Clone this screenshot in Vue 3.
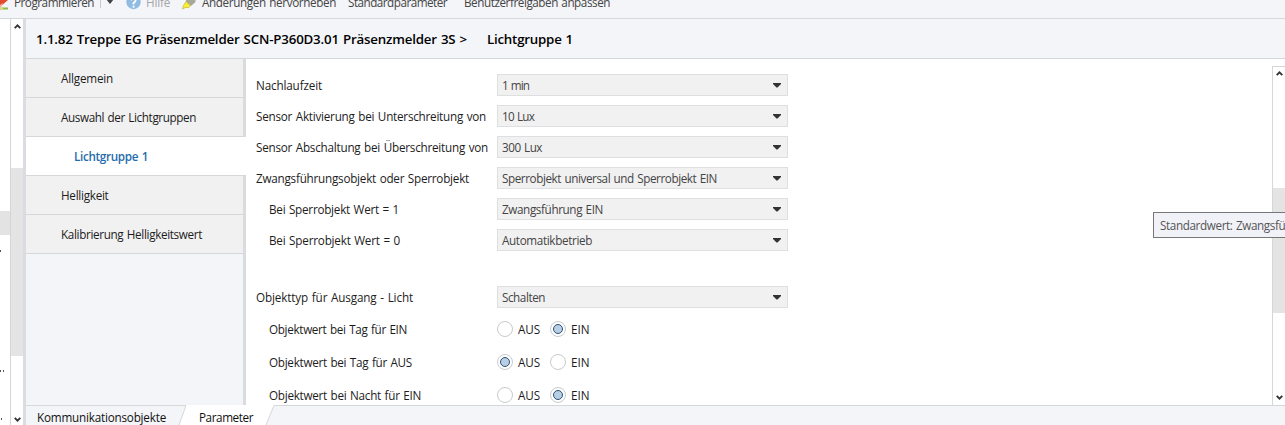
<script setup>
const vFit = {
  mounted(el, { value }) {
    if (!value) return
    const natural = el.getBoundingClientRect().width
    el.style.letterSpacing = (value - 1 - natural) / el.textContent.length + 'px'
  }
}

const nav = [
  { text: 'Allgemein', w: 53 },
  { text: 'Auswahl der Lichtgruppen', w: 136 },
  { text: 'Lichtgruppe 1', w: 75, active: true },
  { text: 'Helligkeit', w: 48.5 },
  { text: 'Kalibrierung Helligkeitswert', w: 142 }
]

const selects = [
  { label: 'Nachlaufzeit', w: 67, value: '1 min', vw: 28 },
  { label: 'Sensor Aktivierung bei Unterschreitung von', w: 231, value: '10 Lux', vw: 33 },
  { label: 'Sensor Abschaltung bei Überschreitung von', w: 233, value: '300 Lux', vw: 41 },
  { label: 'Zwangsführungsobjekt oder Sperrobjekt', w: 214, value: 'Sperrobjekt universal und Sperrobjekt EIN', vw: 216 },
  { label: 'Bei Sperrobjekt Wert = 1', w: 131, value: 'Zwangsführung EIN', vw: 102, sub: true },
  { label: 'Bei Sperrobjekt Wert = 0', w: 132, value: 'Automatikbetrieb', vw: 91, sub: true },
  { label: 'Objekttyp für Ausgang - Licht', w: 158, value: 'Schalten', vw: 44, gap: true }
]

const radios = [
  { label: 'Objektwert bei Tag für EIN', w: 139, on: 1 },
  { label: 'Objektwert bei Tag für AUS', w: 144, on: 0 },
  { label: 'Objektwert bei Nacht für EIN', w: 153, on: 1 }
]
const options = [{ text: 'AUS', w: 23 }, { text: 'EIN', w: 19.5 }]
</script>

<template>
  <div class="app">
    <div class="toolbar">
      <svg class="prog" width="9" height="11" viewBox="0 0 9 11">
        <path d="M0 0H8L0 7Z" fill="#e2492f" />
        <path d="M0 5L3 3L2 6L0 7Z" fill="#f5b59d" />
        <path d="M0 7.5H8V9.5H0Z" fill="#8dbb4a" />
        <path d="M0 7.5H3V9.5H0Z" fill="#e8d77a" />
      </svg>
      <span v-fit="81" class="tb t1">Programmieren</span>
      <i class="sep"></i>
      <svg class="drop" width="8" height="5" viewBox="0 0 8 5"><path d="M0 0H8L4 5Z" fill="#444" /></svg>
      <svg class="help" width="15" height="10" viewBox="0 0 15 10">
        <circle cx="7.5" cy="2" r="7.2" fill="#90bce2" />
        <path d="M5 0Q7.5-2.500 9.500 0Q10 1.500 7.500 3V4.500" fill="none" stroke="#fff" stroke-width="1.800" />
        <rect x="6.600" y="5.700" width="1.900" height="1.900" fill="#fff" />
      </svg>
      <span v-fit="25" class="tb t2 dim">Hilfe</span>
      <svg class="marker" width="15" height="10" viewBox="0 0 15 10">
        <path d="M4 0H13.500V2L9 6L4 2Z" fill="#a9a69a" />
        <path d="M4 1.500L8.500 6L6.500 7.500H3.500L.5 9L1.500 5.500Z" fill="#f7ee2e" stroke="#c5b63c" stroke-width=".7" />
      </svg>
      <span v-fit="135" class="tb t3">Änderungen hervorheben</span>
      <span v-fit="100" class="tb t4">Standardparameter</span>
      <span v-fit="147" class="tb t5">Benutzerfreigaben anpassen</span>
    </div>

    <div class="body">
      <div class="tree">
        <div class="tree-row"></div>
        <span class="cut c1"></span><span class="cut c2"></span><span class="cut c3"></span><span class="cut c4"></span>
      </div>
      <div class="scroll left">
        <svg class="arrow" width="7" height="5" viewBox="0 0 7 5"><path d="M.7 4.200L3.500 1.300L6.300 4.200" /></svg>
        <div class="thumb"></div>
        <svg class="arrow" width="7" height="5" viewBox="0 0 7 5"><path d="M.7 .8L3.500 3.700L6.300 .8" /></svg>
      </div>
      <div class="splitter"></div>

      <div class="main">
        <div class="heading">
          <span v-fit="432">1.1.82 Treppe EG Präsenzmelder SCN-P360D3.01 Präsenzmelder 3S &gt;</span>
          <span v-fit="87" class="crumb">Lichtgruppe 1</span>
        </div>
        <div class="content">
          <nav class="side">
            <div v-for="n in nav" :key="n.text" class="item" :class="{ active: n.active }">
              <span v-fit="n.w">{{ n.text }}</span>
            </div>
          </nav>
          <div class="form">
            <div v-for="s in selects" :key="s.label" class="row" :class="{ sub: s.sub, gap: s.gap }">
              <div class="label"><span v-fit="s.w">{{ s.label }}</span></div>
              <div class="select">
                <span v-fit="s.vw">{{ s.value }}</span>
                <svg width="8" height="5" viewBox="0 0 8 5"><path d="M0 0H8V1L4.500 4.500H3.500L0 1Z" fill="#333" /></svg>
              </div>
            </div>
            <div class="radios">
              <div v-for="r in radios" :key="r.label" class="row sub radio-row">
                <div class="label"><span v-fit="r.w">{{ r.label }}</span></div>
                <div v-for="(o, i) in options" :key="o.text" class="option">
                  <i class="radio" :class="{ on: r.on === i }"></i>
                  <span v-fit="o.w">{{ o.text }}</span>
                </div>
              </div>
            </div>
          </div>
          <div class="scroll right">
            <svg class="arrow" width="7" height="5" viewBox="0 0 7 5"><path d="M.7 4.200L3.500 1.300L6.300 4.200" /></svg>
            <div class="thumb"></div>
            <svg class="arrow" width="7" height="5" viewBox="0 0 7 5"><path d="M.7 .8L3.500 3.700L6.300 .8" /></svg>
          </div>
        </div>
        <div class="tabs">
          <svg class="tab-shape" width="1259" height="20" viewBox="0 0 1259 20">
            <path d="M160 0L153 20H240L248 0Z" fill="#fff" />
            <path d="M0 .5H160L153 20M1259 .5H248L240 20" fill="none" stroke="#d5d7d9" />
          </svg>
          <span v-fit="130" class="tab">Kommunikationsobjekte</span>
          <span v-fit="55" class="tab current">Parameter</span>
        </div>
      </div>
    </div>
    <div class="tooltip"><span v-fit="178">Standardwert: Zwangsführung EIN</span></div>
  </div>
</template>

<style>
body { margin: 0; overflow: hidden; }
</style>

<style scoped>
.app {
  position: relative; width: 1285px; height: 425px; overflow: hidden;
  display: flex; flex-direction: column; background: #f4f5f8;
  font: 11.7px/16px "Open Sans", "Noto Sans", sans-serif; word-spacing: 0.8px; color: #1c1c1c;
}
span { white-space: pre; }
svg { display: block; flex: none; }
.toolbar { height: 18px; flex: none; display: flex; align-items: flex-start; border-bottom: 1px solid #d5d7da; }
.tb { margin-top: -6px; color: #444; flex: none; }
.t1 { margin-left: 5px; }
.sep { width: 1px; height: 8px; background: #c9cacc; margin-left: 6px; }
.drop { margin-left: 5px; margin-top: -1px; }
.help { margin-left: 12px; }
.t2 { margin-left: 5px; }
.dim { color: #a4a5a7; }
.marker { margin-left: 12px; }
.t3 { margin-left: 5px; }
.t4 { margin-left: 12px; }
.t5 { margin-left: 17px; }
.body { flex: 1; display: flex; min-height: 0; }
.tree { position: relative; width: 10px; background: #fff; border-right: 1px solid #d5d5d7; }
.tree-row { margin-top: 192px; height: 24px; background: #e3e3e4; }
.cut { position: absolute; width: 1px; height: 2px; background: #555; }
.c1 { left: 0; top: 231px; }
.c2 { left: 0; top: 351px; }
.c3 { left: 3px; top: 351px; }
.c4 { left: 1px; top: 399px; }
.scroll { display: flex; flex-direction: column; align-items: center; background: #fff; box-sizing: border-box; flex: none; }
.arrow path { fill: none; stroke: #333; stroke-width: 1.8; }
.thumb { width: 100%; background: #e4e4e5; }
.left { width: 12px; padding-top: 5px; }
.left .thumb { margin: 139px 0 61px; height: 188px; }
.splitter { width: 3px; background: #dcdce0; }
.main { flex: 1; min-width: 0; display: flex; flex-direction: column; }
.heading {
  height: 40px; flex: none; display: flex; align-items: center; box-sizing: border-box; padding-left: 10px;
  font-size: 13.3px; font-weight: 600; color: #000; border-bottom: 1px solid #d5d7da;
}
.crumb { margin-left: 20px; }
.content { height: 346px; flex: none; display: flex; background: #fff; overflow: hidden; }
.side { width: 217px; flex: none; background: #f4f5f8; border-right: 3px solid #dadbdd; }
.item { height: 38px; padding: 0 0 0 35px; display: flex; align-items: center; background: #f1f1f1; border-bottom: 1px solid #d5d7da; }
.active { background: #fff; color: #1f6cab; font-weight: 600; padding-left: 48px; margin-right: -3px; position: relative; }
.form { flex: 1; padding: 15px 0 0 10px; }
.row { display: flex; align-items: center; height: 22px; margin-bottom: 9px; color: #1c1c1c; }
.gap { margin-top: 35px; }
.label { width: 241px; flex: none; padding-bottom: 1px; }
.sub .label { padding-left: 13px; width: 228px; }
.select {
  width: 291px; height: 22px; box-sizing: border-box; border: 1px solid #dedfe0; background: #f1f1f1;
  display: flex; align-items: center; justify-content: space-between; padding: 0 6px 1px 4px; color: #444;
}
.select svg { margin-top: 1px; }
.radios { padding-top: 1px; }
.radio-row { margin-bottom: 11px; }
.option { display: flex; align-items: center; width: 53px; }
.option span { padding-bottom: 1px; }
.radio { width: 16px; height: 16px; box-sizing: border-box; border: 1px solid #c9cacc; border-radius: 50%; margin-right: 5px; display: flex; align-items: center; justify-content: center; flex: none; background: #fff; }
.on::before { content: ""; width: 10px; height: 10px; box-sizing: border-box; border-radius: 50%; border: 1px solid #2f4e78; background: #b7cfe4; }
.right { width: 13px; margin-top: 7px; border-left: 1px solid #d5d7da; border-top: 1px solid #d5d7da; padding-top: 4px; }
.right .thumb { margin: 112px 0 82px; height: 125px; }
.tabs { position: relative; height: 20px; flex: none; display: flex; padding-left: 11px; color: #111; }
.tab-shape { position: absolute; left: 0; top: 0; }
.tab { position: relative; margin-top: 4px; }
.current { margin-left: 33px; }
.tooltip {
  position: absolute; left: 1153px; top: 212px; width: 190px; height: 26px; box-sizing: border-box;
  border: 1px solid #777; background: #f1f2f8; color: #555; padding: 4px 6px;
}
</style>
